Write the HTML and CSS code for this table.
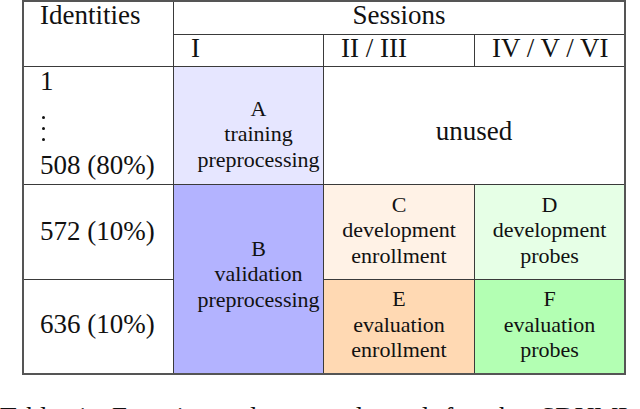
FILE: index.html
```html
<!DOCTYPE html>
<html lang="en">
<head>
<meta charset="utf-8">
<title>Experimental protocol</title>
<link rel="stylesheet" href="styles.css">
</head>
<body>
<div class="sheet">
  <div class="grid">
    <div class="cell head ident-head">Identities</div>
    <div class="cell head sessions last-col">Sessions</div>
    <div class="cell head sub s1">I</div>
    <div class="cell head sub s2">II / III</div>
    <div class="cell head sub s3 last-col">IV / V / VI</div>

    <div class="cell ids ids-first">
      <span class="id-line">1</span>
      <span class="vdots"><i></i><i></i><i></i></span>
      <span class="id-line">508 (80%)</span>
    </div>
    <div class="cell label col-i cell-a">
      <span>A</span><span>training</span><span>preprocessing</span>
    </div>
    <div class="cell unused last-col">unused</div>

    <div class="cell ids ids-mid">572 (10%)</div>
    <div class="cell label col-i cell-b last-row">
      <span>B</span><span>validation</span><span>preprocessing</span>
    </div>
    <div class="cell label cell-c">
      <span>C</span><span>development</span><span>enrollment</span>
    </div>
    <div class="cell label cell-d last-col">
      <span>D</span><span>development</span><span>probes</span>
    </div>

    <div class="cell ids ids-last last-row">636 (10%)</div>
    <div class="cell label cell-e last-row">
      <span>E</span><span>evaluation</span><span>enrollment</span>
    </div>
    <div class="cell label cell-f last-row last-col">
      <span>F</span><span>evaluation</span><span>probes</span>
    </div>
  </div>
  <p class="caption">Table 1: Experimental protocol used for the SDUMLA</p>
</div>
</body>
</html>
```
FILE: styles.css
```css
html, body {
  margin: 0;
  padding: 0;
  background: #ffffff;
  overflow: hidden;
}

body {
  width: 640px;
  height: 409px;
  font-family: "Liberation Serif", "Times New Roman", serif;
  color: #111111;
}

.sheet {
  width: 640px;
}

.grid {
  display: grid;
  grid-template-columns: 150px 150px 151px 149px;
  grid-template-rows: 33px 32px 118px 95px 93px;
  width: 600px;
  margin-left: 22px;
  border: 2px solid #555555;
}

.cell {
  box-sizing: border-box;
  border-right: 1px solid #3a3a3a;
  border-bottom: 1px solid #3a3a3a;
  font-size: 27px;
  line-height: 27px;
}

.last-col { border-right: none; }
.last-row { border-bottom: none; }

.head {
  padding-left: 16px;
}

.ident-head {
  grid-column: 1;
  grid-row: 1 / 3;
}

.sessions {
  grid-column: 2 / 5;
  grid-row: 1;
  text-align: center;
  padding-left: 0;
}

.sub {
  grid-row: 2;
  padding-left: 17px;
}
.s1 { grid-column: 2; }
.s2 { grid-column: 3; }
.s3 { grid-column: 4; }

.ids {
  grid-column: 1;
  padding-left: 16px;
}

.ids-first {
  grid-row: 3;
  display: flex;
  flex-direction: column;
  align-items: flex-start;
  padding-top: 1px;
}

.id-line { display: block; }

.vdots {
  display: flex;
  flex-direction: column;
  gap: 8px;
  margin: 21px 0 11px 2px;
}

.vdots i {
  display: block;
  width: 3px;
  height: 3px;
  border-radius: 50%;
  background: #111111;
}

.ids-mid {
  grid-row: 4;
  display: flex;
  align-items: center;
  padding-bottom: 2px;
}

.ids-last {
  grid-row: 5;
  display: flex;
  align-items: center;
  padding-bottom: 4px;
}

.unused {
  grid-column: 3 / 5;
  grid-row: 3;
  display: flex;
  align-items: center;
  justify-content: center;
  padding-top: 11px;
}

.label {
  display: flex;
  flex-direction: column;
  align-items: center;
  justify-content: center;
  font-size: 22px;
  line-height: 25.5px;
  padding-bottom: 4px;
}

.col-i {
  grid-column: 2;
  padding-left: 20px;
}

.cell-a {
  grid-row: 3;
  background: #e6e6ff;
  padding-top: 17px;
  padding-bottom: 0;
}

.cell-b {
  grid-row: 4 / 6;
  background: #b3b3ff;
  padding-bottom: 10px;
}

.cell-c {
  grid-column: 3;
  grid-row: 4;
  background: #fff2e6;
}

.cell-d {
  grid-column: 4;
  grid-row: 4;
  background: #e6ffe6;
}

.cell-e {
  grid-column: 3;
  grid-row: 5;
  background: #ffd9b3;
}

.cell-f {
  grid-column: 4;
  grid-row: 5;
  background: #b3ffb3;
}

.caption {
  margin: 29px 0 0 0;
  font-size: 27px;
  line-height: 27px;
  white-space: nowrap;
  word-spacing: 9px;
}
```
